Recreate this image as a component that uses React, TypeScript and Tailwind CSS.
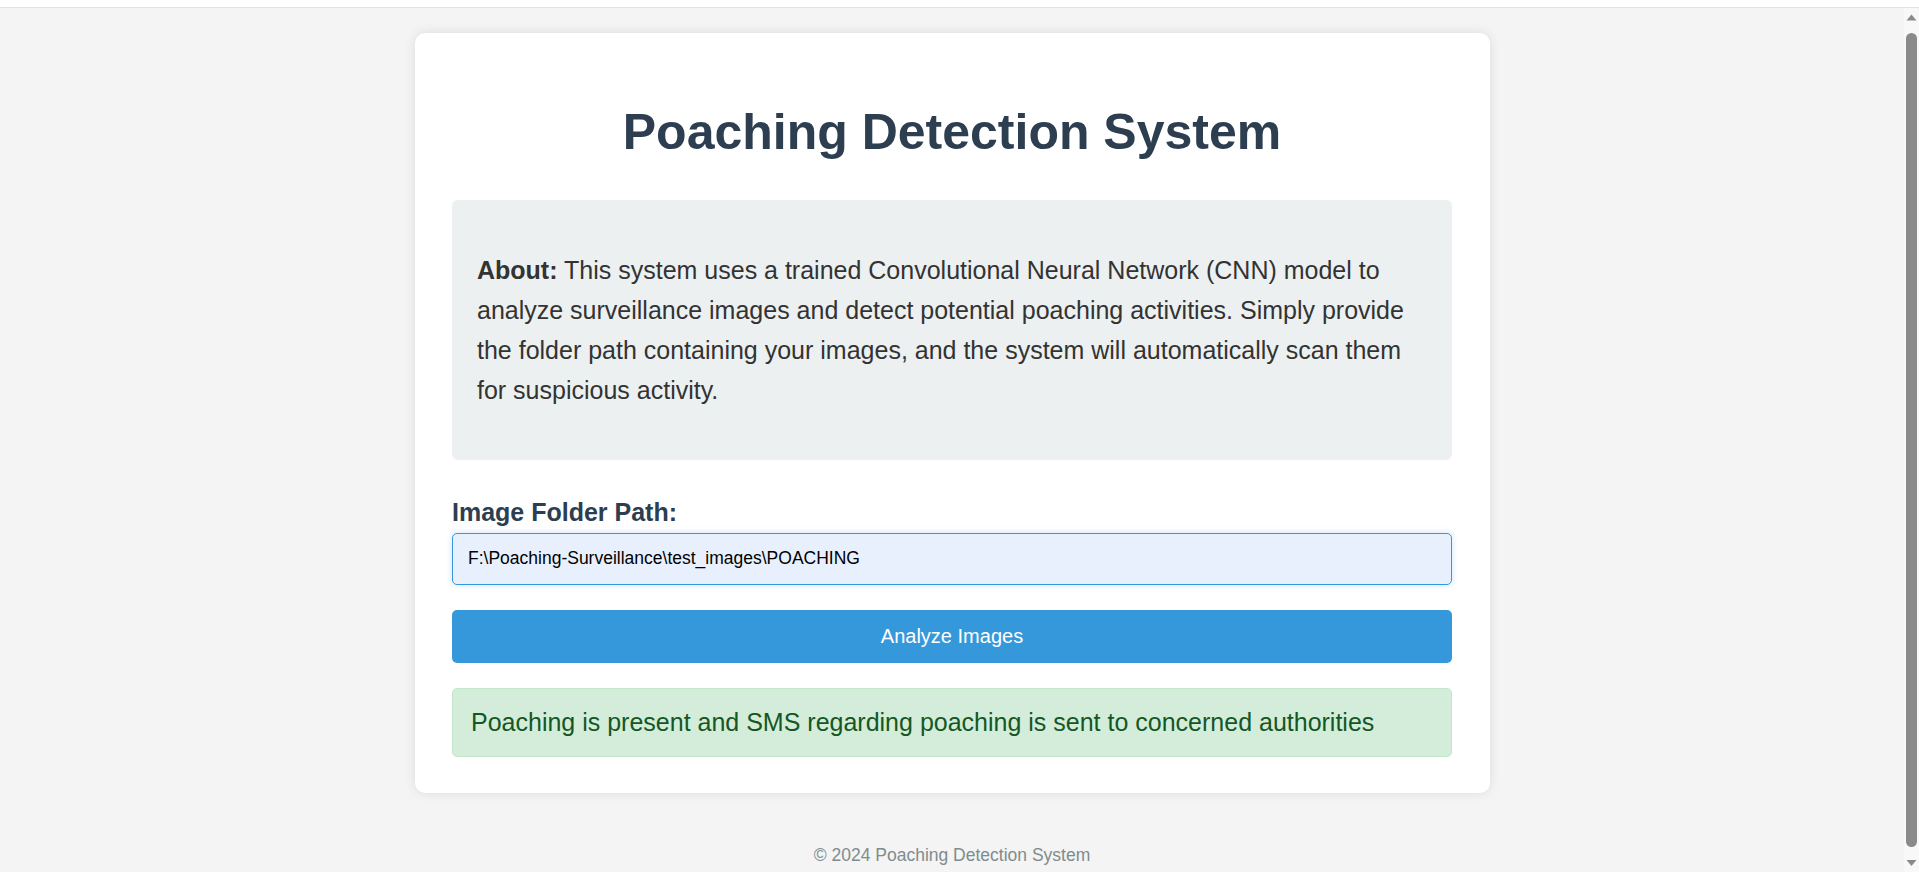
import React from 'react';

function ScrollbarStrip() {
    // stand-in for the browser's page scrollbar seen in the screenshot
    return (
        <div className="w-[15px] shrink-0 bg-[#f8f8f8] flex flex-col items-center">
            <svg width="15" height="17" viewBox="0 0 15 17" className="shrink-0">
                <path d="M2.5 12.5 L7.5 6.5 L12.5 12.5 Z" fill="#8a8a8a" />
            </svg>
            <div className="w-[11px] flex-1 bg-[#8a8a8a] rounded-full my-[8px]"></div>
            <svg width="15" height="17" viewBox="0 0 15 17" className="shrink-0">
                <path d="M2.5 5 L7.5 11 L12.5 5 Z" fill="#8a8a8a" />
            </svg>
        </div>
    );
}

export default function App() {
    return (
        <div className="h-screen overflow-hidden flex flex-col bg-[#f4f4f4] font-['Liberation_Sans',Arial,sans-serif] text-[#333]">
            <div className="h-[8px] shrink-0 bg-white border-b border-[#e2e2e2]"></div>

            <div className="flex flex-1 min-h-0">
                <div className="flex-1 min-w-0">
                    <main className="w-[1075px] mx-auto mt-[25px] mb-[25px] bg-white rounded-[10px] shadow-[0_0_12px_rgba(0,0,0,0.1)] px-[37.5px] pt-[37.5px] pb-[36px]">
                        <h1 className="text-center text-[50px] leading-[57.5px] font-bold text-[#2c3e50] mt-[33.5px] mb-[38.5px]">
                            Poaching Detection System
                        </h1>

                        <div className="bg-[#ecf0f1] rounded-[6px] px-[25px] py-[50px]">
                            <p className="text-[25px] leading-[40px]">
                                <strong>About:</strong> This system uses a trained Convolutional Neural Network (CNN) model to
                                analyze surveillance images and detect potential poaching activities. Simply provide the folder
                                path containing your images, and the system will automatically scan them for suspicious activity.
                            </p>
                        </div>

                        <form className="mt-[37.5px]" onSubmit={(e) => e.preventDefault()}>
                            <label className="block text-[25px] leading-[29px] font-bold text-[#2c3e50] mb-[6px]">
                                Image Folder Path:
                            </label>
                            <input
                                type="text"
                                defaultValue="F:\Poaching-Surveillance\test_images\POACHING"
                                className="block w-full h-[52px] px-[15px] bg-[#e8f0fe] border border-[#3498db] rounded-[5px] text-[17.5px] text-black outline-none shadow-[0_0_6px_rgba(52,152,219,0.25)]"
                            />
                            <button
                                type="submit"
                                className="block w-full mt-[25px] h-[53px] bg-[#3498db] text-white text-[20px] rounded-[5px]"
                            >
                                Analyze Images
                            </button>
                        </form>

                        <div className="mt-[25px] bg-[#d4edda] border border-[#c3e6cb] rounded-[5px] px-[18px] py-[19px] text-[25px] leading-[29px] text-[#155724]">
                            Poaching is present and SMS regarding poaching is sent to concerned authorities
                        </div>
                    </main>

                    <footer className="text-center text-[17.5px] leading-[20px] text-[#7f8c8d] pt-[27px] pb-[32px]">
                        © 2024 Poaching Detection System
                    </footer>
                </div>

                <ScrollbarStrip />
            </div>
        </div>
    );
}
